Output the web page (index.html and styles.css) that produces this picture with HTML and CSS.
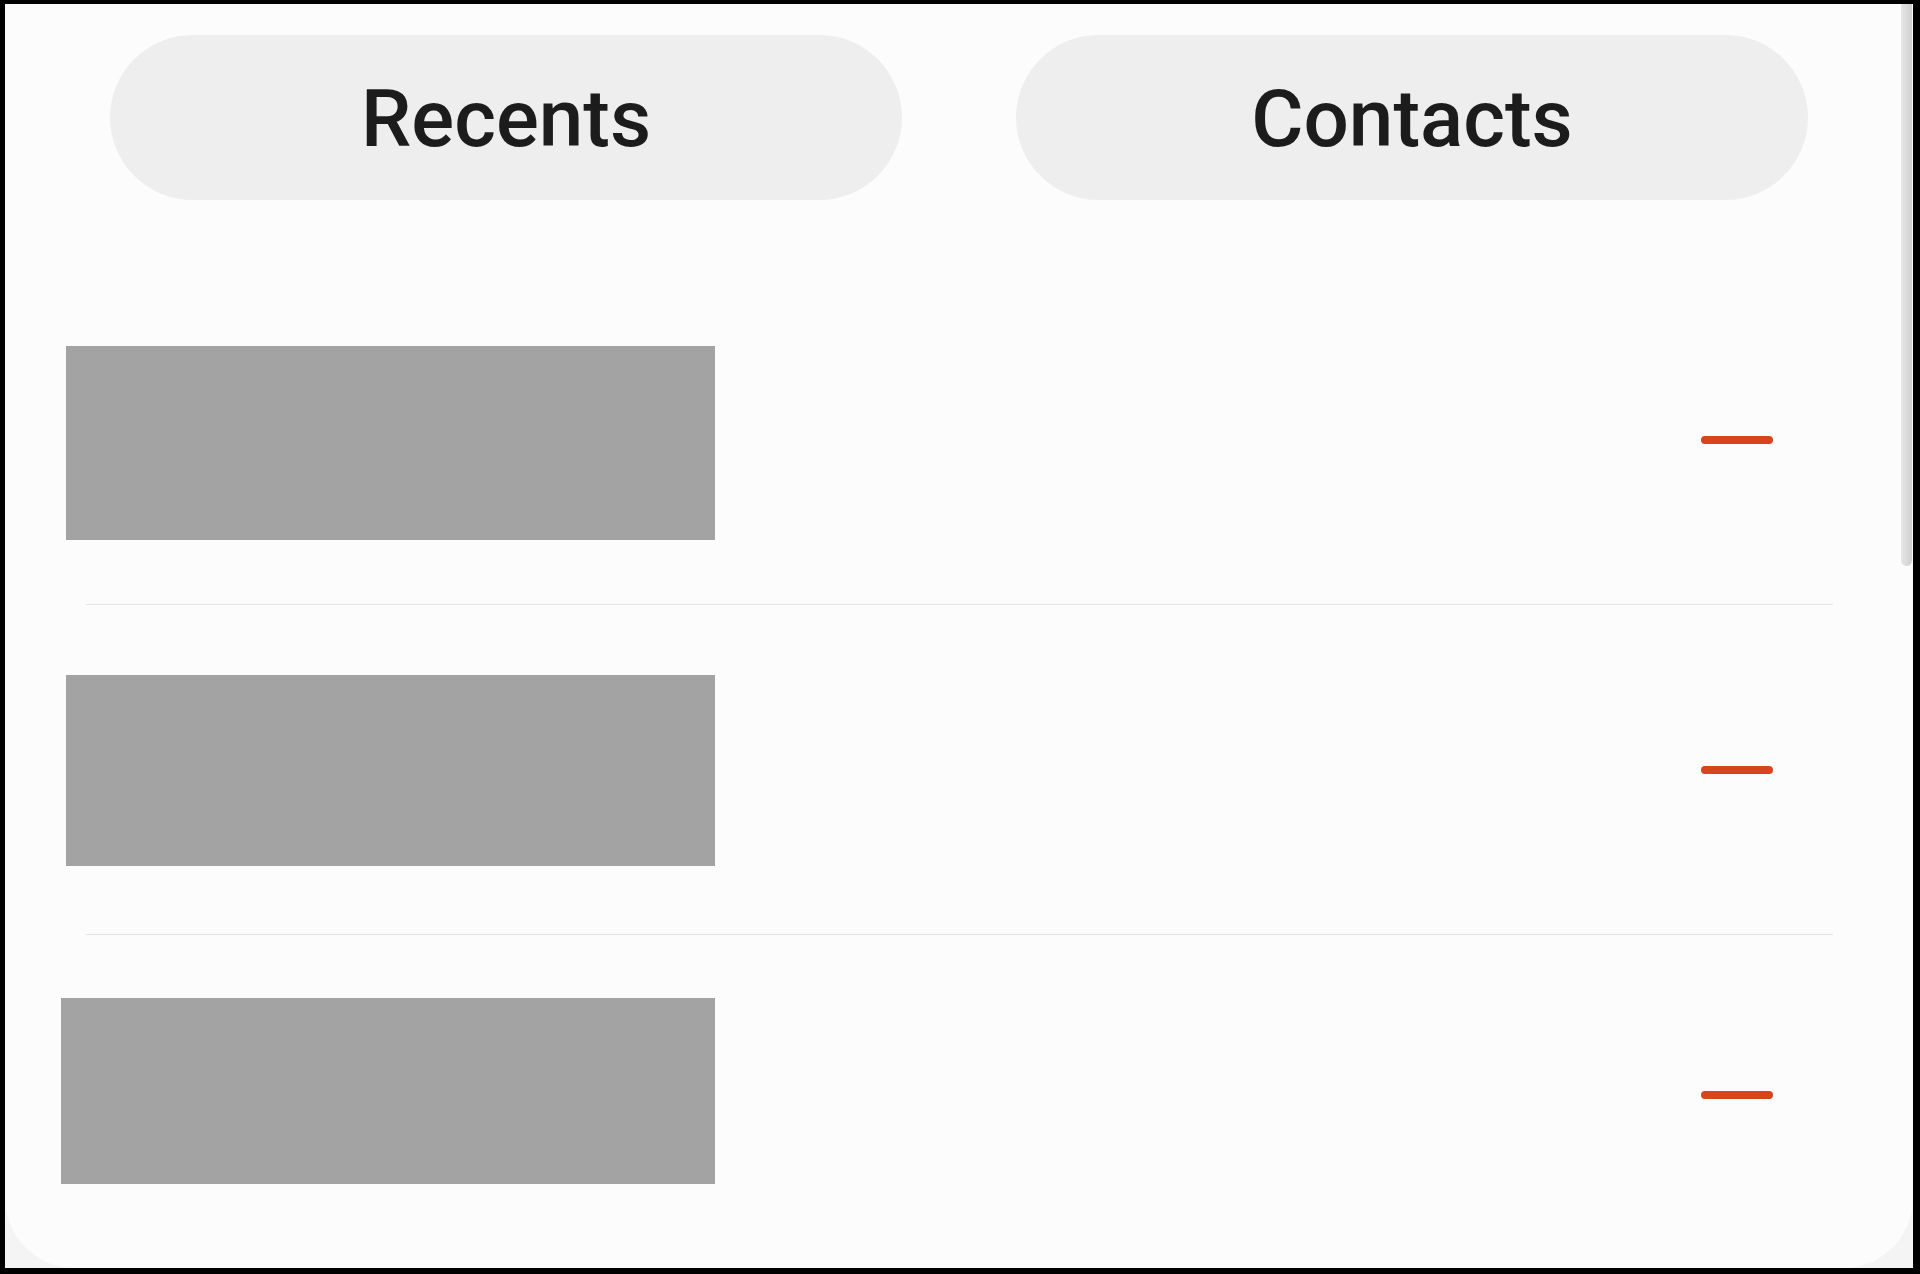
FILE: index.html
```html
<!DOCTYPE html>
<html lang="en">
<head>
    <meta charset="UTF-8">
    <meta name="viewport" content="width=device-width, initial-scale=1.0">
    <title>Phone</title>
    <link rel="stylesheet" href="styles.css">
</head>
<body>
    <div class="frame">
        <div class="screen">
            <div class="tabs">
                <button class="tab">Recents</button>
                <button class="tab">Contacts</button>
            </div>
            <div class="list">
                <div class="row">
                    <div class="block"></div>
                    <span class="remove"></span>
                </div>
                <div class="divider"></div>
                <div class="row">
                    <div class="block block-short"></div>
                    <span class="remove"></span>
                </div>
                <div class="divider"></div>
                <div class="row row-last">
                    <div class="block block-wide"></div>
                    <span class="remove"></span>
                </div>
            </div>
            <div class="scroll-thumb"></div>
        </div>
    </div>
</body>
</html>
```

FILE: styles.css
```css
html, body {
    height: 100%;
}
body {
    margin: 0;
    background: #000;
    padding: 4px 7px 6px 5px;
    box-sizing: border-box;
    font-family: Roboto, "Liberation Sans", sans-serif;
}
.frame {
    height: 100%;
    background: #f4f4f4;
}
.screen {
    position: relative;
    height: 100%;
    background: #fcfcfc;
    border-radius: 0 0 70px 70px;
    overflow: hidden;
}
.tabs {
    display: flex;
    justify-content: center;
    gap: 114px;
    padding-top: 31px;
}
.tab {
    width: 792px;
    height: 165px;
    border: none;
    border-radius: 83px;
    background: #eeeeee;
    color: #1c1c1c;
    font-family: Roboto, "Liberation Sans", sans-serif;
    font-weight: 500;
    font-size: 80px;
    padding: 3px 0 0;
    cursor: pointer;
}
.list {
    margin-top: 75px;
}
.row {
    display: flex;
    align-items: center;
    justify-content: space-between;
    height: 329px;
    padding: 0 140px 0 61px;
}
.row-last {
    height: 330px;
    padding-bottom: 10px;
    box-sizing: border-box;
}
.block {
    width: 649px;
    height: 194px;
    background: #a3a3a3;
    margin-top: 6px;
}
.block-short {
    height: 191px;
    margin-top: 2px;
}
.block-wide {
    width: 654px;
    height: 186px;
    margin-left: -5px;
    margin-top: -8px;
}
.remove {
    width: 72px;
    height: 8px;
    border-radius: 4px;
    background: #d8441b;
}
.divider {
    height: 1px;
    background: #e3e3e3;
    margin: 0 80px 0 81px;
}
.scroll-thumb {
    position: absolute;
    top: 0;
    right: 1px;
    width: 11px;
    height: 562px;
    background: linear-gradient(to right, #e6e6e6, #cfcfcf);
    border-radius: 0 0 6px 6px;
}
```
